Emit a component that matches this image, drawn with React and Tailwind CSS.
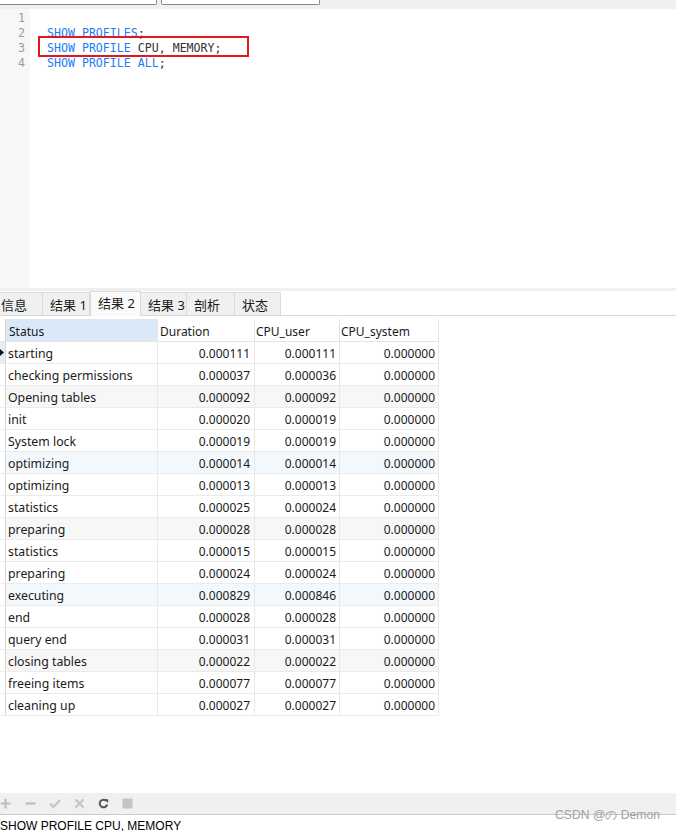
import React from 'react';

const ui = "font-['Noto_Sans','Noto_Sans_CJK_SC',sans-serif]";

const rows = [
    ['starting', '0.000111', '0.000111', '0.000000'],
    ['checking permissions', '0.000037', '0.000036', '0.000000'],
    ['Opening tables', '0.000092', '0.000092', '0.000000'],
    ['init', '0.000020', '0.000019', '0.000000'],
    ['System lock', '0.000019', '0.000019', '0.000000'],
    ['optimizing', '0.000014', '0.000014', '0.000000'],
    ['optimizing', '0.000013', '0.000013', '0.000000'],
    ['statistics', '0.000025', '0.000024', '0.000000'],
    ['preparing', '0.000028', '0.000028', '0.000000'],
    ['statistics', '0.000015', '0.000015', '0.000000'],
    ['preparing', '0.000024', '0.000024', '0.000000'],
    ['executing', '0.000829', '0.000846', '0.000000'],
    ['end', '0.000028', '0.000028', '0.000000'],
    ['query end', '0.000031', '0.000031', '0.000000'],
    ['closing tables', '0.000022', '0.000022', '0.000000'],
    ['freeing items', '0.000077', '0.000077', '0.000000'],
    ['cleaning up', '0.000027', '0.000027', '0.000000'],
];

// row tint pattern as seen in the grid
const rowBg = (i) => {
    if (i === 5 || i === 11) return 'bg-[#f3f8fd]';
    if (i === 2 || i === 8 || i === 14) return 'bg-[#f7f7f7]';
    return 'bg-white';
};

const tabs = [
    { label: '信息', w: 'w-[49px] -ml-[6px]' },
    { label: '结果 1', w: 'w-[47px]' },
    { label: '结果 2', w: 'w-[51px]', active: true },
    { label: '结果 3', w: 'w-[46px]' },
    { label: '剖析', w: 'w-[48px]' },
    { label: '状态', w: 'w-[46px]' },
];

const Kw = ({ children }) => <span className="text-[#1e7ef5]">{children}</span>;

const App = () => {
    return (
        <div className={`w-[676px] h-[831px] overflow-hidden bg-white flex flex-col relative ${ui}`}>
            {/* top strip with the two query fields */}
            <div className="h-[9px] bg-[#f0f0f0] flex items-start shrink-0">
                <div className="w-[157px] h-[5px] bg-white border-r border-b border-[#8a8a8a] rounded-br-[2px]" />
                <div className="ml-[4px] w-[159px] h-[5px] bg-white border-l border-r border-b border-[#8a8a8a] rounded-b-[2px]" />
            </div>

            {/* editor */}
            <div className="h-[279px] flex shrink-0 relative font-['DejaVu_Sans_Mono',monospace] text-[11.6px] leading-[15px]">
                <div className="w-[30px] bg-[#f7f7f7] text-right pr-[5px] pt-[2px] text-[#9a9a9a]">
                    <div>1</div>
                    <div>2</div>
                    <div>3</div>
                    <div>4</div>
                </div>
                <div className="pl-[17px] pt-[2px] text-[#333]">
                    <div>&nbsp;</div>
                    <div><Kw>SHOW PROFILES</Kw>;</div>
                    <div><Kw>SHOW PROFILE</Kw> CPU, MEMORY;</div>
                    <div><Kw>SHOW PROFILE ALL</Kw>;</div>
                </div>
                <div className="absolute left-[38px] top-[27px] w-[211px] h-[21px] border-2 border-[#e3171f]" />
            </div>

            <div className="h-[3px] bg-[#f0f0f0] shrink-0" />

            {/* result tabs */}
            <div className="h-[25px] flex items-end border-b border-[#d9d9d9] shrink-0 text-[13px] text-[#1a1a1a]">
                {tabs.map((t) =>
                    t.active ? (
                        <div key={t.label} className={`${t.w} h-[25px] -mb-px bg-[#fafafa] border-l border-r border-t border-[#d9d9d9] pl-[7px] leading-[22px]`}>
                            {t.label}
                        </div>
                    ) : (
                        <div key={t.label} className={`${t.w} h-[23px] bg-[#f0f0f0] border-r border-t border-[#dcdcdc] pl-[7px] leading-[24px]`}>
                            {t.label}
                        </div>
                    )
                )}
            </div>

            {/* grid */}
            <div className="mt-[3px] w-[439px] text-[12px] text-[#1a1a1a] shrink-0">
                <div className="flex h-[23px] border-b border-[#e4e4e4] leading-[25px]">
                    <div className="w-[6px] border-r border-[#d6d6d6] bg-white" />
                    <div className="w-[152px] pl-[3px] bg-[#d9e9f8] border-r border-[#e4e4e4]">Status</div>
                    <div className="w-[97px] pl-[2px] border-r border-[#e4e4e4]">Duration</div>
                    <div className="w-[85px] pl-[1px] border-r border-[#e4e4e4]">CPU_user</div>
                    <div className="w-[99px] pl-[1px] border-r border-[#e4e4e4]">CPU_system</div>
                </div>
                {rows.map((r, i) => (
                    <div key={i} className={`flex h-[22px] border-b border-[#ebebeb] leading-[23px] ${rowBg(i)}`}>
                        <div className={`w-[6px] border-r border-[#d6d6d6] flex items-center ${i === 0 ? 'bg-[#e5eef8]' : 'bg-white'}`}>
                            {i === 0 && (
                                <svg width="4" height="7" viewBox="0 0 4 7">
                                    <path d="M0 0 L4 3.5 L0 7 Z" fill="#111" />
                                </svg>
                            )}
                        </div>
                        <div className="w-[152px] pl-[2px] border-r border-[#e8e8e8] text-[12.3px]">{r[0]}</div>
                        <div className="w-[97px] pr-[4px] text-right border-r border-[#e8e8e8]">{r[1]}</div>
                        <div className="w-[85px] pr-[3px] text-right border-r border-[#e8e8e8]">{r[2]}</div>
                        <div className="w-[99px] pr-[3px] text-right border-r border-[#e8e8e8]">{r[3]}</div>
                    </div>
                ))}
            </div>

            <div className="flex-1" />

            {/* bottom toolbar */}
            <div className="h-[21px] bg-[#f0f0f0] flex items-center shrink-0">
                <svg width="11" height="11" viewBox="0 0 11 11">
                    <path d="M5.5 0.5 V10.5 M0.5 5.5 H10.5" stroke="#bdbdbd" strokeWidth="2.2" />
                </svg>
                <svg className="ml-[14px]" width="11" height="11" viewBox="0 0 11 11">
                    <path d="M0.5 5.5 H10.5" stroke="#bdbdbd" strokeWidth="2.2" />
                </svg>
                <svg className="ml-[13px]" width="12" height="11" viewBox="0 0 12 11">
                    <path d="M1 5.5 L4.5 9 L11 2" stroke="#c4c4c4" strokeWidth="2.2" fill="none" />
                </svg>
                <svg className="ml-[13px]" width="11" height="11" viewBox="0 0 11 11">
                    <path d="M1.5 1.5 L9.5 9.5 M9.5 1.5 L1.5 9.5" stroke="#c4c4c4" strokeWidth="2.2" />
                </svg>
                <svg className="ml-[13px]" width="11" height="11" viewBox="0 0 11 11">
                    <path d="M8.6 3.2 A3.8 3.8 0 1 0 9.2 6.5" stroke="#555" strokeWidth="2" fill="none" />
                    <path d="M6.3 1.2 L10.2 1.2 L10.2 5 Z" fill="#555" />
                </svg>
                <svg className="ml-[13px]" width="11" height="11" viewBox="0 0 11 11">
                    <rect x="0.5" y="0.5" width="10" height="10" fill="#c4c4c4" />
                </svg>
            </div>
            <div className="h-px bg-[#c9c9c9] shrink-0" />
            <div className="h-[16px] shrink-0 pt-[3px] font-['Liberation_Sans',sans-serif] text-[12px] leading-[16px] text-black whitespace-nowrap">
                SHOW PROFILE CPU, MEMORY
            </div>

            {/* watermark over the status line */}
            <div className="absolute left-[555px] top-[806px] text-[12.2px] leading-[18px] text-[#a0a0a0] font-['Liberation_Sans',sans-serif] whitespace-nowrap">
                CSDN @の Demon
            </div>
        </div>
    );
};

export default App;
